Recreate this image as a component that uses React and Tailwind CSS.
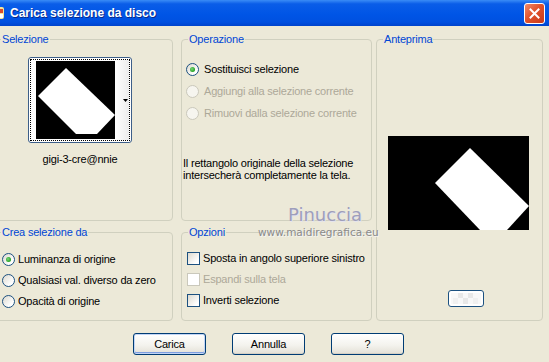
import React from 'react';

const Group = ({ title, className, children }) => (
  <fieldset className={`border border-[#D0D0BF] rounded-[4px] ${className}`}>
    <legend className="ml-[6px] px-[1px] text-[#0046D5] leading-[13px]">{title}</legend>
    {children}
  </fieldset>
);

const Radio = ({ checked, disabled }) => (
  <span
    className={`w-[13px] h-[13px] rounded-full border flex items-center justify-center shrink-0 ${
      disabled ? 'border-[#CAC8BB] bg-[#F6F5EF]' : 'border-[#1C5180] bg-[linear-gradient(135deg,#DCD9CF,#FFFFFF_75%)]'
    }`}
  >
    {checked && <span className="w-[5px] h-[5px] rounded-full bg-[radial-gradient(circle_at_40%_40%,#7BD67B,#21A121_70%)]" />}
  </span>
);

const Check = ({ disabled }) => (
  <span
    className={`w-[13px] h-[13px] border shrink-0 ${
      disabled ? 'border-[#CAC8BB] bg-white' : 'border-[#1C5180] bg-[linear-gradient(135deg,#DCD9CF,#FFFFFF_80%)]'
    }`}
  />
);

const Btn = ({ label, primary }) => (
  <button
    className={`w-[73px] h-[22px] rounded-[3px] border border-[#003C74] bg-[linear-gradient(#FFFFFF,#F4F3EE_55%,#E3E0D6)] text-[11px] text-black leading-none ${
      primary ? 'shadow-[inset_0_0_0_1px_#C2D5F5,inset_0_-1px_0_1px_#7E9EE0]' : 'shadow-[inset_0_-1px_0_#D6D0C5]'
    }`}
  >
    {label}
  </button>
);

export default function App() {
  return (
    <div className="w-[549px] h-[362px] overflow-hidden font-['Liberation_Sans',Arial,sans-serif] text-[11px] tracking-[-0.2px] text-black">
      {/* title bar */}
      <div className="h-[26px] flex items-center bg-[linear-gradient(#3A8CF6,#0A5DE8_15%,#0055E6_55%,#0050E0_85%,#0043CC)]">
        <svg width="16" height="16" viewBox="0 0 16 16" className="ml-[-10px] shrink-0">
          <rect x="2" y="2" width="12" height="12" rx="2" fill="#F3E59A" />
          <rect x="4" y="4" width="4" height="4" fill="#46A146" />
          <rect x="9" y="4" width="4" height="4" fill="#D94B2B" />
          <rect x="4" y="9" width="4" height="4" fill="#3D6FD8" />
          <rect x="9" y="9" width="4" height="4" fill="#FFFFFF" />
        </svg>
        <span className="ml-[4px] text-white font-bold text-[12px] tracking-normal [text-shadow:1px_1px_0_#0A2A8A]">
          Carica selezione da disco
        </span>
        <div className="ml-auto mr-[4px] w-[21px] h-[21px] rounded-[3px] border border-white bg-[linear-gradient(135deg,#F08A6A,#E0532C_45%,#C8391A)] flex items-center justify-center">
          <svg width="11" height="11" viewBox="0 0 11 11">
            <path d="M1.5 1.5 L9.5 9.5 M9.5 1.5 L1.5 9.5" stroke="white" strokeWidth="2" strokeLinecap="square" />
          </svg>
        </div>
      </div>

      {/* body */}
      <div className="relative h-[336px] bg-[#ECE9D8] pt-[7px]">
        <div className="flex">
          <div className="ml-[-6px] w-[179px] flex flex-col gap-[5px]">
            <Group title="Selezione" className="h-[188px]">
              <div className="ml-[33px] mt-[11px] w-[104px] h-[86px] rounded-[3px] border border-[#3C5E88] bg-white p-[1px]">
                <div className="h-full border border-dotted border-black flex">
                  <svg width="79" height="78" viewBox="0 0 79 78" className="ml-[5px] mt-[1px] shrink-0">
                    <rect width="79" height="78" fill="black" />
                    <polygon points="2,35 30,7 79,54 61,73 40,73" fill="white" />
                  </svg>
                  <div className="flex-1 flex items-center justify-end pr-[1px] bg-[linear-gradient(90deg,#FFFFFF,#EDEDED)]">
                    <svg width="5" height="3" viewBox="0 0 5 3">
                      <path d="M0 0 H5 L2.5 3 Z" fill="black" />
                    </svg>
                  </div>
                </div>
              </div>
              <div className="ml-[33px] mt-[10px] w-[104px] text-center leading-[13px]">gigi-3-cre@nnie</div>
            </Group>
            <Group title="Crea selezione da" className="h-[95px]">
              <div className="mt-[10px] pl-[7px] flex flex-col">
                <div className="h-[21px] flex items-center gap-[3px]"><Radio checked />Luminanza di origine</div>
                <div className="h-[21px] flex items-center gap-[3px]"><Radio />Qualsiasi val. diverso da zero</div>
                <div className="h-[21px] flex items-center gap-[3px]"><Radio />Opacità di origine</div>
              </div>
            </Group>
          </div>

          <div className="ml-[8px] w-[191px] flex flex-col gap-[5px]">
            <Group title="Operazione" className="h-[188px]">
              <div className="mt-[12px] pl-[4px] flex flex-col">
                <div className="h-[22px] flex items-center gap-[5px]"><Radio checked />Sostituisci selezione</div>
                <div className="h-[22px] flex items-center gap-[5px] text-[#ACA899]"><Radio disabled />Aggiungi alla selezione corrente</div>
                <div className="h-[22px] flex items-center gap-[5px] text-[#ACA899]"><Radio disabled />Rimuovi dalla selezione corrente</div>
              </div>
              <p className="mt-[33px] pl-[1px] leading-[12px]">
                Il rettangolo originale della selezione
                <br />
                intersecherà completamente la tela.
              </p>
            </Group>
            <Group title="Opzioni" className="h-[95px]">
              <div className="mt-[9px] pl-[5px] flex flex-col">
                <div className="h-[21px] flex items-center gap-[3px]"><Check />Sposta in angolo superiore sinistro</div>
                <div className="h-[21px] flex items-center gap-[3px] text-[#ACA899]"><Check disabled />Espandi sulla tela</div>
                <div className="h-[21px] flex items-center gap-[3px]"><Check />Inverti selezione</div>
              </div>
            </Group>
          </div>

          <Group title="Anteprima" className="ml-[4px] w-[167px] h-[288px]">
            <svg width="141" height="94" viewBox="0 0 141 94" className="ml-[11px] mt-[90px] block">
              <rect width="141" height="94" fill="black" />
              <polygon points="82,12 141,70 119,94 92,94 47,47" fill="white" />
            </svg>
            <button className="ml-[71px] mt-[60px] w-[36px] h-[17px] rounded-[3px] border border-[#1C5180] bg-white p-[2px] flex">
              <svg width="30" height="11" viewBox="0 0 30 11">
                <rect width="30" height="11" fill="#F8F8F8" />
                <rect x="7" y="0" width="5" height="5" fill="#E8E8E8" />
                <rect x="17" y="0" width="5" height="5" fill="#E8E8E8" />
                <rect x="12" y="5" width="5" height="6" fill="#E8E8E8" />
                <rect x="2" y="5" width="5" height="6" fill="#F0F0F0" />
                <rect x="22" y="5" width="5" height="6" fill="#F0F0F0" />
              </svg>
            </button>
          </Group>
        </div>

        <div className="flex gap-[26px] pl-[133px] mt-[12px]">
          <Btn label="Carica" primary />
          <Btn label="Annulla" />
          <Btn label="?" />
        </div>

        {/* watermark over the dialog */}
        <div className="absolute left-[288px] top-[180px] font-['DejaVu_Sans',sans-serif] text-[18px] leading-none tracking-normal text-[#9E9EBB] [text-shadow:1px_1px_0_#E4E4EE]">
          Pinuccia
        </div>
        <div className="absolute left-[258px] top-[201px] font-['DejaVu_Sans',sans-serif] text-[10.5px] leading-none tracking-normal text-[#8A8A8A] [text-shadow:1px_1px_0_#F4F4F4]">
          www.maidiregrafica.eu
        </div>
      </div>
    </div>
  );
}
